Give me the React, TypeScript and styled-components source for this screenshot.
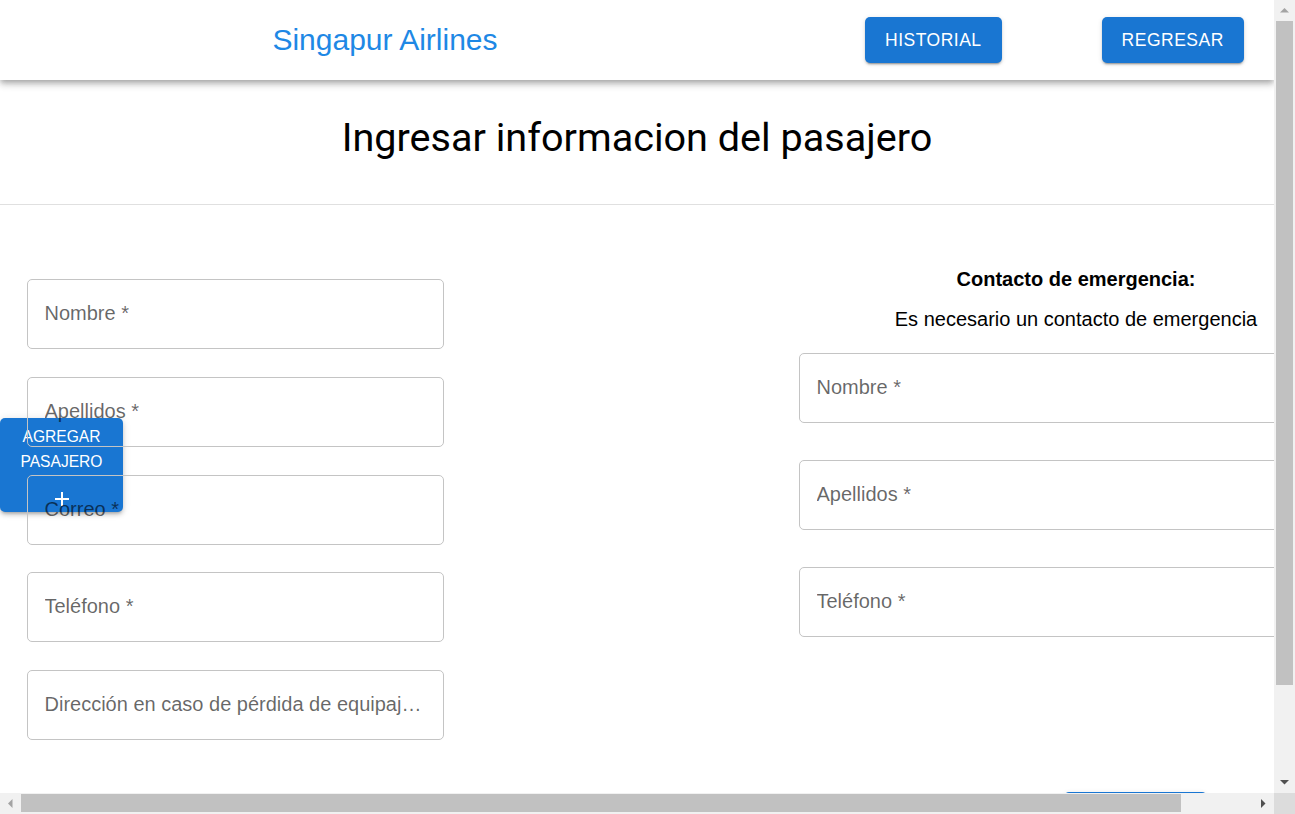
import React from "react";
import styled, { createGlobalStyle } from "styled-components";

const GlobalStyle = createGlobalStyle`
  html, body { margin: 0; padding: 0; height: 100%; overflow: hidden; background: #ffffff; }
  body { font-family: "Liberation Sans", Arial, sans-serif; color: #000; }
  #root { height: 100%; }
`;

/* ---------- browser frame with classic scrollbars ---------- */

const Frame = styled.div`
  display: grid;
  grid-template-columns: 1fr 21px;
  grid-template-rows: 1fr 21px;
  width: 100vw;
  height: 100vh;
`;

const Viewport = styled.div`
  overflow: hidden;
  min-width: 0;
  min-height: 0;
`;

const ScrollBar = styled.div<{ $dir: "v" | "h" }>`
  display: flex;
  flex-direction: ${(p) => (p.$dir === "v" ? "column" : "row")};
  background: #f1f1f1;
`;

const ScrollArrow = styled.div`
  flex: 0 0 21px;
  width: 21px;
  height: 21px;
  display: flex;
  align-items: center;
  justify-content: center;
`;

const ScrollTrack = styled.div<{ $dir: "v" | "h" }>`
  flex: 1;
  display: flex;
  flex-direction: ${(p) => (p.$dir === "v" ? "column" : "row")};
  padding: ${(p) => (p.$dir === "v" ? "0 2px" : "1px 0 2px")};
`;

const ScrollThumb = styled.div<{ $size: number }>`
  flex: 0 0 ${(p) => p.$size}px;
  background: #c1c1c1;
`;

const Corner = styled.div`
  background: #dcdcdc;
`;

type ArrowDir = "up" | "down" | "left" | "right";
const arrowPoints: Record<ArrowDir, string> = {
  up: "1,5.5 5.5,1 10,5.5",
  down: "1,1 10,1 5.5,5.5",
  left: "5.5,1 5.5,10 1,5.5",
  right: "1,1 1,10 5.5,5.5",
};

function Arrow({ dir, disabled }: { dir: ArrowDir; disabled?: boolean }) {
  const vertical = dir === "up" || dir === "down";
  return (
    <ScrollArrow>
      <svg
        width={vertical ? 11 : 7}
        height={vertical ? 7 : 11}
        viewBox={vertical ? "0 0 11 7" : "0 0 7 11"}
      >
        <polygon points={arrowPoints[dir]} fill={disabled ? "#a3a3a3" : "#505050"} />
      </svg>
    </ScrollArrow>
  );
}

/* ---------- page ---------- */

const Page = styled.div`
  display: block;
`;

const AppBar = styled.header`
  position: relative;
  z-index: 2;
  display: flex;
  align-items: center;
  height: 80px;
  background: #ffffff;
  box-shadow: 0px 2.5px 5px -1px rgba(0, 0, 0, 0.2), 0px 5px 6px 0px rgba(0, 0, 0, 0.14),
    0px 1px 12px 0px rgba(0, 0, 0, 0.12);
`;

const BrandCell = styled.div`
  flex: 0 0 770px;
  text-align: center;
`;

const Brand = styled.span`
  font-family: "Liberation Sans", Arial, sans-serif;
  font-size: 30px;
  color: #1e88e5;
`;

const BlueButton = styled.button<{ $before?: number; $minWidth?: number }>`
  margin-left: ${(p) => p.$before ?? 0}px;
  min-width: ${(p) => p.$minWidth ?? 0}px;
  height: 46px;
  padding: 0 20px;
  border: none;
  border-radius: 5px;
  background: #1976d2;
  color: #ffffff;
  font-family: "Liberation Sans", Arial, sans-serif;
  font-weight: 400;
  font-size: 17.5px;
  letter-spacing: 0.5px;
  text-transform: uppercase;
  box-shadow: 0px 3px 1px -2px rgba(0, 0, 0, 0.2), 0px 2px 2px 0px rgba(0, 0, 0, 0.14),
    0px 1px 5px 0px rgba(0, 0, 0, 0.12);
  cursor: pointer;
`;

const HeadingSection = styled.section`
  padding: 32.25px 0 39.25px;
  border-bottom: 1px solid #e0e0e0;
`;

const Heading = styled.h1`
  margin: 0;
  font-family: Roboto, "Liberation Sans", sans-serif;
  font-weight: 400;
  font-size: 39.6px;
  line-height: 52.5px;
  text-align: center;
  color: #000;
`;

const FormArea = styled.main`
  position: relative;
  width: 1353px;
  padding: 62.5px 0 59px;
`;

const Fab = styled.button`
  position: absolute;
  left: 0;
  top: 213px;
  width: 123px;
  height: 94px;
  display: flex;
  flex-direction: column;
  align-items: center;
  padding: 5.5px 0 0;
  border: none;
  border-radius: 5px;
  background: #1976d2;
  color: #ffffff;
  font-family: "Liberation Sans", Arial, sans-serif;
  font-size: 15.6px;
  line-height: 25px;
  box-shadow: 0px 3px 3px -2px rgba(0, 0, 0, 0.2), 0px 3px 4px 0px rgba(0, 0, 0, 0.14),
    0px 1px 8px 0px rgba(0, 0, 0, 0.12);
`;

const FabIcon = styled.svg`
  margin-top: 17.5px;
  display: block;
`;

const FormGrid = styled.div`
  display: grid;
  grid-template-columns: 417px 554px;
  column-gap: 355px;
  padding-left: 27px;
  align-items: start;
`;

const Column = styled.div<{ $offset?: number }>`
  display: flex;
  flex-direction: column;
  padding-top: ${(p) => p.$offset ?? 0}px;
`;

const FieldStack = styled.div<{ $gap: number }>`
  display: flex;
  flex-direction: column;
  gap: ${(p) => p.$gap}px;
`;

const Field = styled.div`
  position: relative;
  box-sizing: border-box;
  height: 70px;
  border: 1px solid #c4c4c4;
  border-radius: 5px;
  padding: 19px 0 0 16.5px;
`;

const Label = styled.label`
  display: block;
  max-width: calc(100% - 19.5px);
  font-family: "Liberation Sans", Arial, sans-serif;
  font-size: 20px;
  line-height: 28.75px;
  color: rgba(0, 0, 0, 0.6);
  white-space: nowrap;
  overflow: hidden;
  text-overflow: ellipsis;
`;

const ContactTitle = styled.p`
  margin: 0 0 17.8px;
  font-size: 20px;
  line-height: 23px;
  font-weight: 700;
  text-align: center;
`;

const ContactNote = styled.p`
  margin: 0 0 21.7px;
  font-size: 20px;
  line-height: 23px;
  text-align: center;
`;

const Footer = styled.div`
  display: grid;
  grid-template-columns: 417px 554px;
  column-gap: 355px;
  padding-left: 27px;
  margin-top: 52px;
`;

const FooterCell = styled.div`
  grid-column: 2;
  padding-left: 265px;
`;

const passengerFields = [
  "Nombre *",
  "Apellidos *",
  "Correo *",
  "Teléfono *",
  "Dirección en caso de pérdida de equipaje *",
];

const contactFields = ["Nombre *", "Apellidos *", "Teléfono *"];

export default function App() {
  return (
    <Frame>
      <GlobalStyle />
      <Viewport>
        <Page>
          <AppBar>
            <BrandCell>
              <Brand>Singapur Airlines</Brand>
            </BrandCell>
            <BlueButton $before={95}>Historial</BlueButton>
            <BlueButton $before={100}>Regresar</BlueButton>
          </AppBar>
          <HeadingSection>
            <Heading>Ingresar informacion del pasajero</Heading>
          </HeadingSection>
          <FormArea>
            <Fab>
              <span>AGREGAR</span>
              <span>PASAJERO</span>
              <FabIcon width="16" height="16" viewBox="0 0 16 16">
                <path d="M8 1v14M1 8h14" stroke="#ffffff" strokeWidth="2" fill="none" />
              </FabIcon>
            </Fab>
            <FormGrid>
              <Column $offset={11.5}>
                <FieldStack $gap={27.75}>
                  {passengerFields.map((f) => (
                    <Field key={f}>
                      <Label>{f}</Label>
                    </Field>
                  ))}
                </FieldStack>
              </Column>
              <Column>
                <ContactTitle>Contacto de emergencia:</ContactTitle>
                <ContactNote>Es necesario un contacto de emergencia</ContactNote>
                <FieldStack $gap={37}>
                  {contactFields.map((f) => (
                    <Field key={f}>
                      <Label>{f}</Label>
                    </Field>
                  ))}
                </FieldStack>
              </Column>
            </FormGrid>
            <Footer>
              <FooterCell>
                <BlueButton $minWidth={143}>Guardar</BlueButton>
              </FooterCell>
            </Footer>
          </FormArea>
        </Page>
      </Viewport>
      <ScrollBar $dir="v">
        <Arrow dir="up" disabled />
        <ScrollTrack $dir="v">
          <ScrollThumb $size={664} />
        </ScrollTrack>
        <Arrow dir="down" />
      </ScrollBar>
      <ScrollBar $dir="h">
        <Arrow dir="left" disabled />
        <ScrollTrack $dir="h">
          <ScrollThumb $size={1160} />
        </ScrollTrack>
        <Arrow dir="right" />
      </ScrollBar>
      <Corner />
    </Frame>
  );
}
